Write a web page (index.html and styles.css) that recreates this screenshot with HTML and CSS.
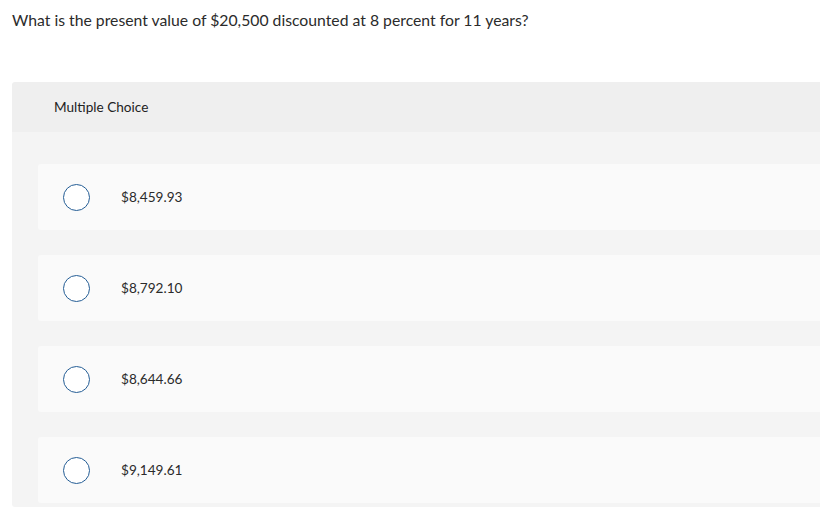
FILE: index.html
```html
<!DOCTYPE html>
<html>
<head>
<meta charset="utf-8">
<link rel="stylesheet" href="styles.css">
</head>
<body>
<div class="page">
  <p class="question">What is the present value of $20,500 discounted at 8 percent for 11 years?</p>
  <section class="panel">
    <header class="panel-head">Multiple Choice</header>
    <div class="panel-body">
      <div class="option"><span class="radio"></span><span class="label">$8,459.93</span></div>
      <div class="option"><span class="radio"></span><span class="label">$8,792.10</span></div>
      <div class="option"><span class="radio"></span><span class="label">$8,644.66</span></div>
      <div class="option"><span class="radio"></span><span class="label">$9,149.61</span></div>
    </div>
  </section>
</div>
</body>
</html>
```
FILE: styles.css
```css
* { box-sizing: border-box; }
html, body { margin: 0; padding: 0; background: #fff; }
body {
  font-family: "Lato", "Open Sans", "Liberation Sans", sans-serif;
  color: #2b2b2b;
}
.page { padding: 11px 0 0 12px; }
.question {
  margin: 0;
  font-size: 15.75px;
  line-height: 18px;
  color: #2b2b2b;
}
.panel {
  margin-top: 53px;
  border-radius: 3px 0 0 3px;
  overflow: hidden;
}
.panel-head {
  background: #efefef;
  height: 50px;
  display: flex;
  align-items: center;
  padding-left: 42px;
  font-size: 13.6px;
  color: #222;
}
.panel-body {
  background: #f4f4f4;
  padding: 32px 0 4px 26px;
  display: flex;
  flex-direction: column;
  gap: 25px;
}
.option {
  background: #fafafa;
  height: 66px;
  border-radius: 3px 0 0 3px;
  display: flex;
  align-items: center;
  padding-left: 25px;
}
.radio {
  width: 27px;
  height: 27px;
  border: 1.5px solid #245d95;
  border-radius: 50%;
  background: #fff;
  flex: none;
}
.label {
  margin-left: 31px;
  font-size: 13.6px;
  color: #2b2b2b;
}
```
